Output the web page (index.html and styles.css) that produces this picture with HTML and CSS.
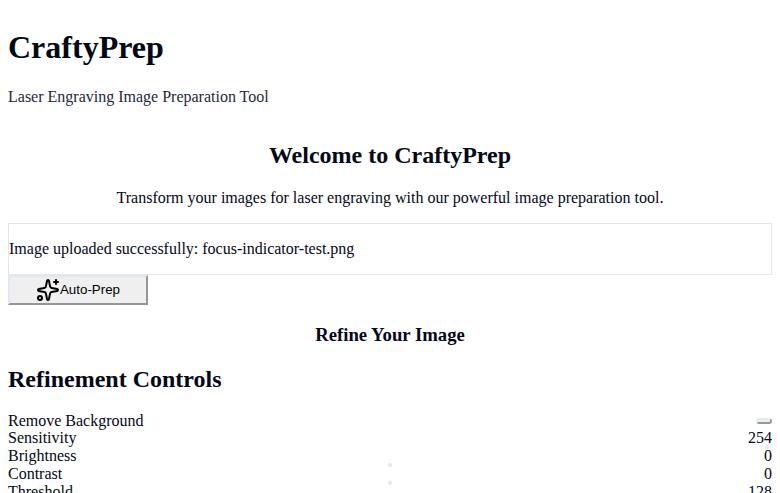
FILE: index.html
```html
<!DOCTYPE html>
<html lang="en">
<head>
<meta charset="utf-8">
<title>CraftyPrep</title>
<link rel="stylesheet" href="styles.css">
</head>
<body>
<header>
  <h1>CraftyPrep</h1>
  <p class="tagline">Laser Engraving Image Preparation Tool</p>
</header>
<main>
  <section class="intro">
    <h2>Welcome to CraftyPrep</h2>
    <p>Transform your images for laser engraving with our powerful image preparation tool.</p>
  </section>
  <div class="notice"><p>Image uploaded successfully: focus-indicator-test.png</p></div>
  <button class="auto-prep" type="button">
    <svg width="24" height="24" viewBox="0 0 24 24" fill="none" stroke="currentColor" stroke-width="2" stroke-linecap="round" stroke-linejoin="round" aria-hidden="true">
      <path d="M11.017 2.814a1 1 0 0 1 1.966 0l1.051 5.558a2 2 0 0 0 1.594 1.594l5.558 1.051a1 1 0 0 1 0 1.966l-5.558 1.051a2 2 0 0 0-1.594 1.594l-1.051 5.558a1 1 0 0 1-1.966 0l-1.051-5.558a2 2 0 0 0-1.594-1.594l-5.558-1.051a1 1 0 0 1 0-1.966l5.558-1.051a2 2 0 0 0 1.594-1.594z"/>
      <path d="M20 2v4"/><path d="M22 4h-4"/><circle cx="4" cy="20" r="2"/>
    </svg><span class="button-label">Auto-Prep</span></button>
  <h3>Refine Your Image</h3>
  <section>
    <h2 class="controls-title">Refinement Controls</h2>
    <div class="row toggle"><span>Remove Background</span><button class="switch" type="button" aria-label="Remove Background"></button></div>
    <div class="row"><span>Sensitivity</span><span>254</span><i class="thumb thumb-end"></i></div>
    <div class="row"><span>Brightness</span><span>0</span><i class="thumb"></i></div>
    <div class="row"><span>Contrast</span><span>0</span><i class="thumb"></i></div>
    <div class="row"><span>Threshold</span><span>128</span></div>
  </section>
</main>
</body>
</html>
```
FILE: styles.css
```css
html {
  overflow: hidden;
}
body {
  margin: 8px;
  background: #fff;
  color: #020817;
  font: 16px/18px "Liberation Serif", serif;
}
h1 {
  margin: 21px 0;
  padding-top: 21px;
  margin-top: 0;
  font-size: 32px;
  line-height: 37px;
}
p {
  margin: 16px 0;
}
.tagline {
  margin: 0;
  padding-top: 1px;
  color: #1e293b;
}
.intro {
  padding-top: 16px;
  text-align: center;
}
h2 {
  margin: 20px 0;
  font-size: 24px;
  line-height: 27px;
}
.controls-title {
  margin-bottom: 19px;
}
.notice {
  display: flex;
  align-items: center;
  box-sizing: border-box;
  height: 52px;
  border: 1px solid #e2e8f0;
}
.auto-prep {
  display: flex;
  align-items: center;
  justify-content: center;
  box-sizing: border-box;
  width: 140px;
  height: 30px;
  padding: 1px 6px;
  border: 2px outset #e2e8f0;
  border-radius: 0;
  background: #efefef;
  color: #000;
  font: 13.333px "Liberation Sans", sans-serif;
}
.button-label {
  padding-bottom: 2px;
}
h3 {
  margin: 19px 0;
  font-size: 18.72px;
  line-height: 22px;
  text-align: center;
}
.row {
  position: relative;
  display: flex;
  align-items: center;
  justify-content: space-between;
  height: 18px;
}
.toggle {
  height: 17px;
}
.switch {
  box-sizing: border-box;
  width: 16px;
  height: 6px;
  padding: 1px 6px;
  border: 2px outset #e2e8f0;
  border-radius: 9999px;
  background: #efefef;
}
.thumb {
  position: absolute;
  left: 50%;
  top: 16px;
  box-sizing: border-box;
  width: 4px;
  height: 4px;
  margin-left: -2px;
  border: 2px solid #e2e8f0;
  border-radius: 50%;
}
.thumb-end {
  left: 759px;
}
```
